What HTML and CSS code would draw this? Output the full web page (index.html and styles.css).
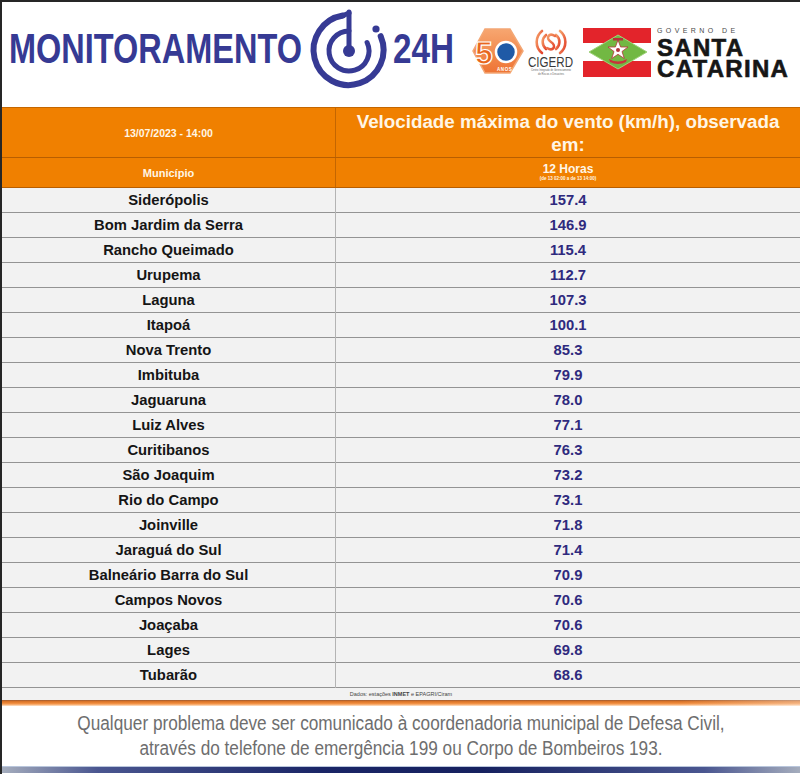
FILE: index.html
```html
<!DOCTYPE html>
<html lang="pt-BR">
<head>
<meta charset="utf-8">
<title>Monitoramento 24H</title>
<link rel="stylesheet" href="styles.css">
</head>
<body>
<div class="page">
  <header class="top">
    <svg class="logo-mon" width="468" height="105" viewBox="0 0 468 105">
      <g transform="translate(-2,-2)">
        <text class="mon-text" x="9" y="63" font-size="42" textLength="293" lengthAdjust="spacingAndGlyphs">MONITORAMENTO</text>
        <g fill="none" stroke="#363a94" stroke-linecap="round">
          <path d="M342.8,15.5 A35,35 0 1 0 380.7,36.2" stroke-width="6"/>
          <path d="M349,31 A20,20 0 1 0 367.1,42.5" stroke-width="5"/>
          <line x1="349" y1="51" x2="349" y2="12" stroke-width="5"/>
          <line x1="349" y1="13" x2="342" y2="16" stroke-width="5"/>
        </g>
        <circle cx="349" cy="51" r="6" fill="#363a94"/>
        <circle cx="376" cy="29" r="3.6" fill="#363a94"/>
        <text class="mon-text" x="393" y="63" font-size="42" textLength="61" lengthAdjust="spacingAndGlyphs">24H</text>
      </g>
    </svg>
    <svg class="logo-50" width="57" height="105" viewBox="0 0 57 105">
      <defs>
        <linearGradient id="g50" x1="0" y1="0" x2="0" y2="1">
          <stop offset="0" stop-color="#f7a670"/>
          <stop offset="1" stop-color="#ee7434"/>
        </linearGradient>
      </defs>
      <g transform="translate(-470,-2)">
        <polygon points="485,29 510,29 523,51 510,73 485,73 473,51" fill="url(#g50)" stroke="#f3a775" stroke-width="1.5"/>
        <text x="475" y="64" class="five" font-size="32">5</text>
        <circle cx="506" cy="52" r="10" fill="#1f5aa6" stroke="#ffffff" stroke-width="2.5"/>
        <text x="497" y="71" class="anos" font-size="4.5">ANOS</text>
      </g>
    </svg>
    <svg class="logo-cigerd" width="52" height="105" viewBox="0 0 52 105">
      <defs>
        <linearGradient id="gwave" x1="0" y1="0" x2="1" y2="1">
          <stop offset="0" stop-color="#f6a26a"/>
          <stop offset="1" stop-color="#e2402a"/>
        </linearGradient>
      </defs>
      <g transform="translate(-527,-2)">
        <g fill="none" stroke="url(#gwave)" stroke-width="2.6" stroke-linecap="round">
          <path d="M542,31 A14,14 0 0 0 542,53"/>
          <path d="M546,35 A9,9 0 0 0 546,49"/>
          <path d="M560,31 A14,14 0 0 1 560,53"/>
          <path d="M556,35 A9,9 0 0 1 556,49"/>
          <path d="M555,36 C549,32 545,38 551,42 C557,46 553,52 547,48"/>
        </g>
        <text x="528" y="67" class="cig" font-size="14" textLength="45" lengthAdjust="spacingAndGlyphs">CIGERD</text>
        <text x="531" y="71" class="cig-sub" font-size="2.6" textLength="40" lengthAdjust="spacingAndGlyphs">Centro Integrado de Gerenciamento</text>
        <text x="538" y="74.5" class="cig-sub" font-size="2.6" textLength="26" lengthAdjust="spacingAndGlyphs">de Riscos e Desastres</text>
      </g>
    </svg>
    <svg class="logo-flag" width="75" height="105" viewBox="0 0 75 105">
      <g transform="translate(-579,-2)">
        <rect x="583" y="28" width="68" height="15" fill="#e3242b"/>
        <rect x="583" y="43" width="68" height="18" fill="#ffffff"/>
        <rect x="583" y="61" width="68" height="16" fill="#e3242b"/>
        <polygon points="589,52 618,35 647,52 618,69" fill="#72b843" stroke="#9fd27a" stroke-width="1"/>
        <polygon points="618,40 620.6,47 628,47 622,51.5 624.3,58.5 618,54.3 611.7,58.5 614,51.5 608,47 615.4,47" fill="#ffffff" stroke="#b5323a" stroke-width="0.8"/>
        <circle cx="618" cy="50" r="2" fill="#b5323a"/>
        <rect x="613" y="38" width="10" height="2.5" fill="#b5323a"/>
        <path d="M609,59 Q618,64 627,59 L626,62 Q618,66 610,62 Z" fill="#c8343a"/>
      </g>
    </svg>
    <div class="sc">
      <span class="gov">GOVERNO DE</span>
      <span class="sc-name">SANTA</span>
      <span class="sc-name">CATARINA</span>
    </div>
  </header>

  <section class="table">
    <div class="hrow hrow1">
      <div class="hcell date">13/07/2023 - 14:00</div>
      <div class="hcell title">Velocidade máxima do vento (km/h), observada em:</div>
    </div>
    <div class="hrow hrow2">
      <div class="hcell small">Município</div>
      <div class="hcell period"><span class="hours">12 Horas</span><span class="range">(de 13 02:00 a de 13 14:00)</span></div>
    </div>
    <div class="row"><div class="city">Siderópolis</div><div class="val">157.4</div></div>
    <div class="row"><div class="city">Bom Jardim da Serra</div><div class="val">146.9</div></div>
    <div class="row"><div class="city">Rancho Queimado</div><div class="val">115.4</div></div>
    <div class="row"><div class="city">Urupema</div><div class="val">112.7</div></div>
    <div class="row"><div class="city">Laguna</div><div class="val">107.3</div></div>
    <div class="row"><div class="city">Itapoá</div><div class="val">100.1</div></div>
    <div class="row"><div class="city">Nova Trento</div><div class="val">85.3</div></div>
    <div class="row"><div class="city">Imbituba</div><div class="val">79.9</div></div>
    <div class="row"><div class="city">Jaguaruna</div><div class="val">78.0</div></div>
    <div class="row"><div class="city">Luiz Alves</div><div class="val">77.1</div></div>
    <div class="row"><div class="city">Curitibanos</div><div class="val">76.3</div></div>
    <div class="row"><div class="city">São Joaquim</div><div class="val">73.2</div></div>
    <div class="row"><div class="city">Rio do Campo</div><div class="val">73.1</div></div>
    <div class="row"><div class="city">Joinville</div><div class="val">71.8</div></div>
    <div class="row"><div class="city">Jaraguá do Sul</div><div class="val">71.4</div></div>
    <div class="row"><div class="city">Balneário Barra do Sul</div><div class="val">70.9</div></div>
    <div class="row"><div class="city">Campos Novos</div><div class="val">70.6</div></div>
    <div class="row"><div class="city">Joaçaba</div><div class="val">70.6</div></div>
    <div class="row"><div class="city">Lages</div><div class="val">69.8</div></div>
    <div class="row"><div class="city">Tubarão</div><div class="val">68.6</div></div>
    <div class="source">Dados: estações <b>INMET</b> e EPAGRI/Ciram</div>
  </section>

  <div class="bar-orange"></div>
  <footer class="note">
    <p>Qualquer problema deve ser comunicado à coordenadoria municipal de Defesa Civil,</p>
    <p>através do telefone de emergência 199 ou Corpo de Bombeiros 193.</p>
  </footer>
  <div class="bar-blue"></div>
</div>
</body>
</html>
```

FILE: styles.css
```css
* { box-sizing: border-box; }
html, body { margin: 0; padding: 0; background: #ffffff; }
body { font-family: "Liberation Sans", Arial, sans-serif; }

.page {
  width: 800px;
  height: 774px;
  border-top: 2px solid #262626;
  border-left: 2px solid #262626;
  background: #ffffff;
  overflow: hidden;
}

/* header */
.top {
  display: flex;
  height: 105px;
  background: #ffffff;
}
.top svg { display: block; flex: none; }
.mon-text {
  font-family: "Liberation Sans", Arial, sans-serif;
  font-weight: 700;
  fill: #363a94;
}
.five {
  font-family: "Liberation Sans", Arial, sans-serif;
  font-weight: 700;
  fill: #e8661e;
  stroke: #ffffff;
  stroke-width: 1.2;
}
.anos {
  font-family: "Liberation Sans", Arial, sans-serif;
  font-weight: 700;
  fill: #ffffff;
  letter-spacing: 0.6px;
}
.cig {
  font-family: "Liberation Sans", Arial, sans-serif;
  fill: #3a3a3a;
}
.cig-sub {
  font-family: "Liberation Sans", Arial, sans-serif;
  fill: #666666;
}
.sc {
  flex: 1;
  display: flex;
  flex-direction: column;
  align-items: flex-start;
  padding: 24px 0 0 3px;
}
.gov {
  font-size: 7px;
  line-height: 9px;
  letter-spacing: 3.4px;
  color: #4a4a4a;
}
.sc-name {
  font-size: 24px;
  line-height: 21px;
  font-weight: 700;
  color: #161616;
  letter-spacing: 1.3px;
  -webkit-text-stroke: 0.6px #161616;
}
.gov + .sc-name { margin-top: 2px; }

/* table */
.table { background: #f2f2f2; }
.hrow {
  display: grid;
  grid-template-columns: 333px 1fr;
  background: #f08000;
  color: #fff6e6;
  font-weight: 700;
}
.hrow1 {
  height: 51px;
  border-top: 1px solid #c46600;
  border-bottom: 1px solid #b85e00;
}
.hrow2 {
  height: 30px;
  border-bottom: 1px solid #b85e00;
}
.hcell {
  display: flex;
  align-items: center;
  justify-content: center;
  text-align: center;
}
.hcell + .hcell { border-left: 1px solid #c46600; }
.date { font-size: 10.5px; }
.title {
  font-size: 18.8px;
  line-height: 23px;
  padding: 0 8px;
}
.small { font-size: 11px; }
.period {
  flex-direction: column;
  padding-bottom: 2px;
}
.hours { font-size: 12px; line-height: 14px; }
.range { font-size: 4.5px; line-height: 6px; }

.row {
  display: grid;
  grid-template-columns: 333px 1fr;
  height: 25px;
  border-bottom: 1px solid #949494;
  font-size: 14.8px;
  font-weight: 700;
  line-height: 25px;
  text-align: center;
}
.city { color: #151515; }
.val {
  color: #2f2a7e;
  border-left: 1px solid #b4b4b4;
}
.source {
  height: 12px;
  font-size: 5.5px;
  line-height: 12px;
  text-align: center;
  color: #444444;
}

.bar-orange {
  height: 6px;
  background:
    linear-gradient(to right, rgba(255,255,255,0) 85%, rgba(255,255,255,0.35) 100%),
    linear-gradient(to bottom, #9b5a32 0, #d9742a 25%, #f08a3a 55%, #f8b47c 80%, #fde7d2 100%);
}

.note {
  height: 60px;
  padding-top: 5px;
  text-align: center;
  color: #6e6e6e;
  font-size: 20px;
  line-height: 25px;
}
.note p {
  margin: 0;
  transform: scaleX(0.86);
  white-space: nowrap;
}

.bar-blue {
  height: 7px;
  border-top: 1px solid #b9c6dc;
  background: linear-gradient(to right, #a5adbd 0%, #4a5690 12%, #1a2566 40%, #16215f 60%, #4a5690 88%, #a5adbd 100%);
}
```
